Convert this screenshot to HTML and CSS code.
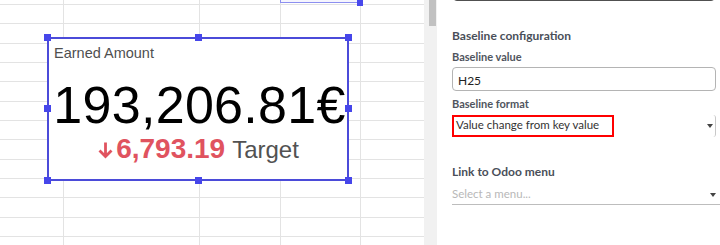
FILE: index.html
```html
<!DOCTYPE html>
<html>
<head>
<meta charset="utf-8">
<link rel="stylesheet" href="styles.css">
</head>
<body>
<div class="app">
  <div class="sheet">
    <div class="cell-sel"><span class="cell-handle"></span></div>
    <div class="figure">
      <div class="fig-title">Earned Amount</div>
      <div class="fig-value">193,206.81€</div>
      <div class="fig-baseline">
        <svg class="arrow" width="17" height="18" viewBox="0 0 17 18"><path d="M8.5 1.5 V15.5 M2.5 9.5 L8.5 15.5 L14.5 9.5" fill="none" stroke="#e0535f" stroke-width="2.8" stroke-linecap="butt"/></svg>
        <span class="delta">6,793.19</span>
        <span class="desc">Target</span>
      </div>
      <span class="h h-tl"></span><span class="h h-tm"></span><span class="h h-tr"></span>
      <span class="h h-ml"></span><span class="h h-mr"></span>
      <span class="h h-bl"></span><span class="h h-bm"></span><span class="h h-br"></span>
    </div>
  </div>
  <div class="scroll"><div class="thumb"></div></div>
  <div class="panel">
    <div class="top-input"></div>
    <div class="section-title">Baseline configuration</div>
    <div class="label">Baseline value</div>
    <div class="input">H25</div>
    <div class="label">Baseline format</div>
    <div class="select">
      <span>Value change from key value</span>
      <span class="caret"></span>
      <div class="highlight"></div>
    </div>
    <div class="section-title link">Link to Odoo menu</div>
    <div class="menu-select">
      <span>Select a menu...</span>
      <span class="caret"></span>
    </div>
  </div>
</div>
</body>
</html>
```
FILE: styles.css
```css
html, body {
  margin: 0;
  padding: 0;
  background: #fff;
}
.app {
  display: flex;
  width: 720px;
  height: 245px;
  overflow: hidden;
}
.sheet {
  position: relative;
  width: 424px;
  flex: none;
  height: 245px;
  background-color: #fff;
  background-image:
    linear-gradient(to right, transparent 63px, #e3e3e3 63px, #e3e3e3 64px, transparent 64px),
    linear-gradient(to right, transparent 199px, #e3e3e3 199px, #e3e3e3 200px, transparent 200px),
    linear-gradient(to right, transparent 280px, #e3e3e3 280px, #e3e3e3 281px, transparent 281px),
    linear-gradient(to right, transparent 360px, #e3e3e3 360px, #e3e3e3 361px, transparent 361px),
    repeating-linear-gradient(to bottom, #e3e3e3 0, #e3e3e3 1px, transparent 1px, transparent 19.33px);
  background-position: 0 0, 0 0, 0 0, 0 0, 0 4px;
  background-repeat: no-repeat, no-repeat, no-repeat, no-repeat, repeat;
}
.cell-sel {
  position: absolute;
  left: 280px;
  top: -20px;
  width: 80px;
  height: 23px;
  border-bottom: 1px solid #8c8ff0;
  border-left: 1px solid #8c8ff0;
  background: rgba(80, 90, 230, 0.06);
  box-sizing: border-box;
}
.cell-handle {
  position: absolute;
  right: -3px;
  bottom: -4px;
  width: 6px;
  height: 6px;
  background: #4848ec;
}
.figure {
  position: absolute;
  left: 47px;
  top: 37px;
  width: 302px;
  height: 144px;
  box-sizing: border-box;
  border: 2px solid #4b4bd9;
  background: #fff;
  display: flex;
  flex-direction: column;
  font-family: "Liberation Sans", Arial, sans-serif;
}
.fig-title {
  font-size: 14.5px;
  color: #4f4f4f;
  padding: 6px 0 0 5px;
  line-height: 16px;
}
.fig-value {
  font-size: 52px;
  line-height: 52px;
  color: #000;
  text-align: center;
  margin-top: 18px;
  padding-left: 3px;
  letter-spacing: 0.3px;
}
.fig-baseline {
  display: flex;
  align-items: baseline;
  justify-content: center;
  margin-top: 3px;
  margin-left: 0;
}
.arrow {
  align-self: center;
  margin-right: 2px;
  margin-top: 2px;
}
.delta {
  font-size: 28px;
  font-weight: bold;
  color: #e0535f;
  line-height: 30px;
}
.desc {
  font-size: 24px;
  color: #525252;
  margin-left: 7px;
}
.h {
  position: absolute;
  width: 7px;
  height: 7px;
  background: #4646ea;
}
.h-tl { left: -5px; top: -5px; }
.h-tm { left: 146px; top: -5px; }
.h-tr { right: -5px; top: -5px; }
.h-ml { left: -5px; top: 66px; }
.h-mr { right: -5px; top: 66px; }
.h-bl { left: -5px; bottom: -5px; }
.h-bm { left: 146px; bottom: -5px; }
.h-br { right: -5px; bottom: -5px; }

.scroll {
  width: 13px;
  flex: none;
  background: #f1f1f1;
  position: relative;
}
.thumb {
  position: absolute;
  left: 5px;
  top: 0;
  width: 7px;
  height: 26px;
  background: #c1c1c1;
}
.panel {
  flex: 1;
  padding: 0 0 0 15px;
  font-family: Lato, "Noto Sans", sans-serif;
  color: #4a4f59;
  background: #fff;
}
.top-input {
  margin-top: -30px;
  height: 31px;
  width: 264px;
  box-sizing: border-box;
  border: 1.5px solid #505050;
  border-radius: 5px;
}
.section-title {
  font-size: 12px;
  font-weight: bold;
  margin-top: 27px;
  line-height: 16px;
}
.label {
  font-size: 11px;
  font-weight: bold;
  margin-top: 6px;
  line-height: 14px;
  color: #50555e;
}
.input {
  margin-top: 3px;
  width: 264px;
  height: 24px;
  box-sizing: border-box;
  border: 1px solid #b4b4b4;
  border-radius: 4px;
  font-size: 12px;
  color: #222;
  padding: 5px 0 0 5px;
}
.select {
  position: relative;
  margin-top: 4px;
  width: 264px;
  height: 22px;
  box-sizing: border-box;
  border-right: 1px solid #c8c8c8;
  border-radius: 3px;
  font-size: 11.5px;
  color: #333;
  padding: 3px 0 0 4px;
}
.caret {
  position: absolute;
  right: 2px;
  top: 9px;
  width: 0;
  height: 0;
  border-left: 3px solid transparent;
  border-right: 3px solid transparent;
  border-top: 4px solid #444;
}
.highlight {
  position: absolute;
  left: 0;
  top: 0;
  width: 162px;
  height: 22px;
  box-sizing: border-box;
  border: 2px solid #f00;
}
.section-title.link {
  margin-top: 27px;
}
.menu-select {
  position: relative;
  margin-top: 5px;
  width: 268px;
  height: 20px;
  box-sizing: border-box;
  border-bottom: 1px solid #bdbdbd;
  font-size: 11.5px;
  color: #b8b8b8;
  padding: 2px 0 0 0;
}
.menu-select .caret {
  right: 4px;
  top: 8px;
}
```
